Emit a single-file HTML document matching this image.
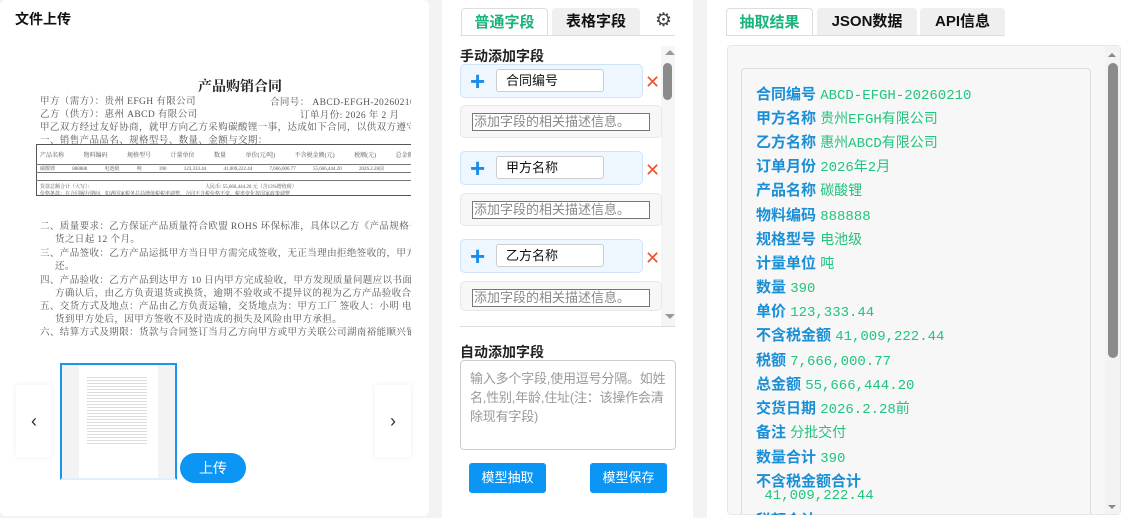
<!DOCTYPE html>
<html><head><meta charset="utf-8"><style>
*{box-sizing:border-box;margin:0;padding:0}
html,body{width:1135px;height:518px;overflow:hidden}
body{background:#f3f3f3;font-family:"Liberation Sans","Noto Sans CJK SC",sans-serif;position:relative}
.card{position:absolute;background:#fff;border-radius:6px}
.abs{position:absolute}
.docwrap{position:absolute;left:0;top:0;width:411px;height:350px;overflow:hidden}
.doc{font-family:"Liberation Serif","Noto Serif CJK SC",serif;color:#555;font-size:9.5px;letter-spacing:0.4px;white-space:nowrap}
.tab{position:absolute;height:27px;background:#efefef;border-radius:4px 4px 0 0;font-weight:bold;font-size:15px;text-align:center;line-height:27px;color:#111}
.tab.on{background:#fff;border:1px solid #ddd;border-bottom:none;color:#19b47a}
.fld{position:absolute;left:460px;width:183px;height:34px;background:#eef6ff;border:1px solid #cfe4fb;border-radius:5px}
.fld .plus{position:absolute;left:9px;top:2px;color:#1a8de8;font-size:26px;font-weight:bold;line-height:28px}
.fld .inp{position:absolute;left:35px;top:4px;width:108px;height:23px;background:#fff;border:1px solid #ccc;border-radius:3px;font-size:13px;line-height:21px;padding-left:9px;color:#111}
.x{position:absolute;left:645px;color:#e53;font-size:18px}
.desc{position:absolute;left:460px;width:202px;height:33px;background:#f7f7f7;border:1px solid #e8e8e8;border-radius:5px}
.desc div{position:absolute;left:11px;top:7px;width:178px;height:18px;border:1px solid #777;background:#fff;font-size:13px;color:#888;line-height:16px;padding-left:1px;overflow:hidden;white-space:nowrap}
.row{position:absolute;left:756px;font-size:15px;white-space:nowrap}
.row b{color:#1a8fd6}
.row span{color:#22c47e;font-family:"Liberation Mono","Noto Sans CJK SC",monospace;font-size:14px}
.btn{position:absolute;background:#0b95f5;color:#fff;font-size:13px;text-align:center;border-radius:3px}
</style></head><body>
<div class="card" style="left:0;top:0;width:429px;height:516px"></div>
<div class="abs" style="left:15px;top:9px;font-size:14px;font-weight:bold;color:#111">文件上传</div>
<div class="docwrap"><div class="doc">
<div class="abs" style="left:198px;top:76px;font-size:14px;font-weight:bold;color:#222;letter-spacing:0">产品购销合同</div>
<div class="abs" style="left:40px;top:93px">甲方（需方）：贵州 EFGH 有限公司</div>
<div class="abs" style="left:270px;top:94px">合同号： ABCD-EFGH-20260210</div>
<div class="abs" style="left:40px;top:106px">乙方（供方）：惠州 ABCD 有限公司</div>
<div class="abs" style="left:300px;top:107px">订单月份: 2026 年 2 月</div>
<div class="abs" style="left:40px;top:119px">甲乙双方经过友好协商，就甲方向乙方采购碳酸锂一事，达成如下合同，以供双方遵守：</div>
<div class="abs" style="left:40px;top:132px">一、销售产品品名、规格型号、数量、金额与交期：</div>
<div class="abs" style="left:36px;top:144px;width:380px;height:52px;border:1px solid #555;border-right:none"></div>
<div class="abs" style="left:36px;top:164px;width:380px;border-top:1px solid #777"></div>
<div class="abs" style="left:36px;top:172px;width:380px;border-top:1px solid #777"></div>
<div class="abs" style="left:36px;top:180px;width:380px;border-top:1px solid #777"></div>
<div class="abs" style="left:40px;top:150px;font-size:6px;word-spacing:18px;letter-spacing:0">产品名称 物料编码 规格型号 计量单位 数量 单价(元/吨) 不含税金额(元) 税额(元) 总金额(元) 交货日期</div>
<div class="abs" style="left:40px;top:165px;font-size:5px;word-spacing:16px;letter-spacing:0">碳酸锂 888888 电池级 吨 390 123,333.44 41,009,222.44 7,666,000.77 55,666,444.20 2026.2.28前</div>
<div class="abs" style="left:40px;top:183px;font-size:5px;letter-spacing:0">货款总额合计（大写）：　　　　　　　　　　　　　　　　　　　　　　　人民币: 55,666,444.20 元（含13%增值税）</div>
<div class="abs" style="left:40px;top:190px;font-size:5px;letter-spacing:0">价格条款：在合同履行期间，如遇国家税务总局增值税税率调整，合同不含税价格不变，税率变化按国家政策调整</div>
<div class="abs" style="left:40px;top:218px">二、质量要求：乙方保证产品质量符合欧盟 ROHS 环保标准，具体以乙方《产品规格书》为准，质保期</div>
<div class="abs" style="left:55px;top:231px">货之日起 12 个月。</div>
<div class="abs" style="left:40px;top:245px">三、产品签收：乙方产品运抵甲方当日甲方需完成签收，无正当理由拒绝签收的，甲方已付货款乙方不</div>
<div class="abs" style="left:55px;top:258px">还。</div>
<div class="abs" style="left:40px;top:272px">四、产品验收：乙方产品到达甲方 10 日内甲方完成验收，甲方发现质量问题应以书面形式向乙方提出，</div>
<div class="abs" style="left:55px;top:285px">方确认后，由乙方负责退货或换货，逾期不验收或不提异议的视为乙方产品验收合格。</div>
<div class="abs" style="left:40px;top:298px">五、交货方式及地点：产品由乙方负责运输，交货地点为：甲方工厂 签收人：小明 电话：1234567891</div>
<div class="abs" style="left:55px;top:311px">货到甲方处后，因甲方签收不及时造成的损失及风险由甲方承担。</div>
<div class="abs" style="left:40px;top:324px">六、结算方式及期限：货款与合同签订当月乙方向甲方或甲方关联公司湖南裕能顺兴销售有限公司所采</div>
</div></div>
<div class="abs" style="left:16px;top:385px;width:36px;height:72px;background:#fff;box-shadow:0 0 6px #eee;font-size:18px;color:#333;line-height:72px;text-align:center">‹</div>
<div class="abs" style="left:375px;top:385px;width:36px;height:72px;background:#fff;box-shadow:0 0 6px #eee;font-size:18px;color:#333;line-height:72px;text-align:center">›</div>
<div class="abs" style="left:60px;top:363px;width:117px;height:117px;border:2px solid #1a95f0;border-bottom-color:#e0efff;background:#f3f3f3">
<div class="abs" style="left:17px;top:0;width:79px;height:113px;background:#fff;background-image:repeating-linear-gradient(#fff 0 2px,#ddd 2px 3px);background-size:60px 70px;background-repeat:no-repeat;background-position:8px 10px"></div></div>
<div class="btn" style="left:180px;top:453px;width:66px;height:30px;border-radius:15px;line-height:30px;font-size:14px">上传</div>
<div class="card" style="left:442px;top:0;width:251px;height:518px;border-radius:0"></div>
<div class="tab on" style="left:461px;top:8px;width:87px">普通字段</div>
<div class="tab" style="left:552px;top:8px;width:88px">表格字段</div>
<div class="abs" style="left:655px;top:9px;font-size:19px;color:#444">⚙</div>
<div class="abs" style="left:460px;top:35px;width:215px;border-top:1px solid #ddd"></div>
<div class="abs" style="left:460px;top:46px;font-size:14px;font-weight:bold;color:#222">手动添加字段</div>
<div class="abs" style="left:661px;top:46px;width:14px;height:280px;background:#f5f5f5"></div>
<div class="abs" style="left:665px;top:50px;width:0;height:0;border:5px solid transparent;border-bottom-color:#999;border-top:none"></div>
<div class="abs" style="left:663px;top:63px;width:9px;height:37px;background:#8b8b8b;border-radius:5px"></div>
<div class="abs" style="left:665px;top:314px;width:0;height:0;border:5px solid transparent;border-top-color:#999;border-bottom:none"></div>
<div class="fld" style="top:64px"><div class="plus">+</div><div class="inp">合同编号</div></div><div class="x" style="top:72px">✕</div>
<div class="desc" style="top:105px"><div>添加字段的相关描述信息。</div></div>
<div class="fld" style="top:151px"><div class="plus">+</div><div class="inp">甲方名称</div></div><div class="x" style="top:160px">✕</div>
<div class="desc" style="top:193px"><div>添加字段的相关描述信息。</div></div>
<div class="fld" style="top:239px"><div class="plus">+</div><div class="inp">乙方名称</div></div><div class="x" style="top:248px">✕</div>
<div class="desc" style="top:281px;height:30px"><div>添加字段的相关描述信息。</div></div>
<div class="abs" style="left:460px;top:326px;width:216px;border-top:1px solid #ddd"></div>
<div class="abs" style="left:460px;top:342px;font-size:14px;font-weight:bold;color:#222">自动添加字段</div>
<div class="abs" style="left:460px;top:360px;width:216px;height:90px;border:1px solid #ccc;border-radius:4px;padding:8px 6px 8px 9px;font-size:13px;line-height:19px;color:#999;letter-spacing:-0.2px">输入多个字段,使用逗号分隔。如姓名,性别,年龄,住址(注：该操作会清除现有字段)</div>
<div class="btn" style="left:469px;top:463px;width:77px;height:30px;line-height:30px">模型抽取</div>
<div class="btn" style="left:590px;top:463px;width:77px;height:30px;line-height:30px">模型保存</div>
<div class="card" style="left:707px;top:0;width:428px;height:518px;border-radius:0"></div>
<div class="tab on" style="left:726px;top:8px;width:87px">抽取结果</div>
<div class="tab" style="left:817px;top:8px;width:100px">JSON数据</div>
<div class="tab" style="left:920px;top:8px;width:85px">API信息</div>
<div class="abs" style="left:726px;top:35px;width:279px;border-top:1px solid #ddd"></div>
<div class="abs" style="left:727px;top:45px;width:394px;height:470px;background:#f7f7f7;border:1px solid #e8e8e8;border-radius:4px;overflow:hidden">
<div class="abs" style="left:13px;top:22px;width:350px;height:460px;border:1px solid #ddd;border-radius:4px"></div>
</div>
<div class="abs" style="left:1105px;top:46px;width:15px;height:468px;background:#f3f3f3"></div>
<div class="abs" style="left:1108px;top:53px;width:0;height:0;border:4px solid transparent;border-bottom-color:#888;border-top:none"></div>
<div class="abs" style="left:1108px;top:63px;width:10px;height:295px;background:#8b8b8b;border-radius:5px"></div>
<div class="abs" style="left:1108px;top:505px;width:0;height:0;border:4px solid transparent;border-top-color:#888;border-bottom:none"></div>
<div class="abs" style="left:727px;top:46px;width:378px;height:469px;overflow:hidden">
<div style="position:relative;left:-727px;top:-46px">
<div class="row" style="top:83px"><b>合同编号</b> <span>ABCD-EFGH-20260210</span></div>
<div class="row" style="top:107px"><b>甲方名称</b> <span>贵州EFGH有限公司</span></div>
<div class="row" style="top:131px"><b>乙方名称</b> <span>惠州ABCD有限公司</span></div>
<div class="row" style="top:155px"><b>订单月份</b> <span>2026年2月</span></div>
<div class="row" style="top:179px"><b>产品名称</b> <span>碳酸锂</span></div>
<div class="row" style="top:204px"><b>物料编码</b> <span>888888</span></div>
<div class="row" style="top:228px"><b>规格型号</b> <span>电池级</span></div>
<div class="row" style="top:252px"><b>计量单位</b> <span>吨</span></div>
<div class="row" style="top:276px"><b>数量</b> <span>390</span></div>
<div class="row" style="top:300px"><b>单价</b> <span>123,333.44</span></div>
<div class="row" style="top:324px"><b>不含税金额</b> <span>41,009,222.44</span></div>
<div class="row" style="top:349px"><b>税额</b> <span>7,666,000.77</span></div>
<div class="row" style="top:373px"><b>总金额</b> <span>55,666,444.20</span></div>
<div class="row" style="top:397px"><b>交货日期</b> <span>2026.2.28前</span></div>
<div class="row" style="top:421px"><b>备注</b> <span>分批交付</span></div>
<div class="row" style="top:446px"><b>数量合计</b> <span>390</span></div>
<div class="row" style="top:470px"><b>不含税金额合计</b></div>
<div class="row" style="top:486px"><span>&nbsp;41,009,222.44</span></div>
<div class="row" style="top:509px"><b>税额合计</b> <span>55,666,444.20</span></div>
</div></div>
</body></html>
